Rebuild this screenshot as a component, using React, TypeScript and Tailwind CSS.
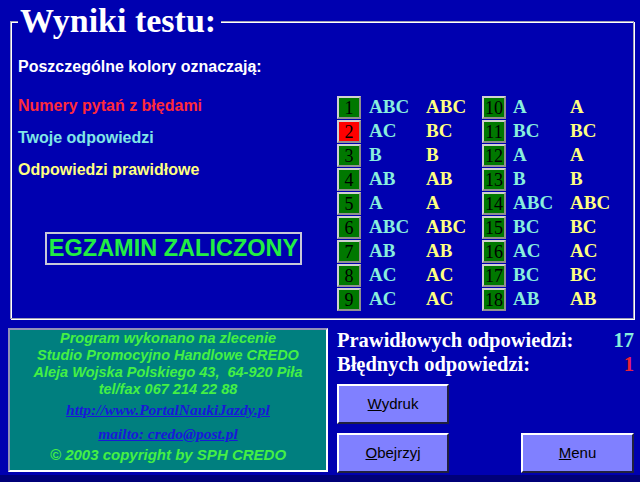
import React from "react";

type Row = { n: number; yours: string; correct: string };

const rows: Row[] = [
  { n: 1, yours: "ABC", correct: "ABC" },
  { n: 2, yours: "AC", correct: "BC" },
  { n: 3, yours: "B", correct: "B" },
  { n: 4, yours: "AB", correct: "AB" },
  { n: 5, yours: "A", correct: "A" },
  { n: 6, yours: "ABC", correct: "ABC" },
  { n: 7, yours: "AB", correct: "AB" },
  { n: 8, yours: "AC", correct: "AC" },
  { n: 9, yours: "AC", correct: "AC" },
  { n: 10, yours: "A", correct: "A" },
  { n: 11, yours: "BC", correct: "BC" },
  { n: 12, yours: "A", correct: "A" },
  { n: 13, yours: "B", correct: "B" },
  { n: 14, yours: "ABC", correct: "ABC" },
  { n: 15, yours: "BC", correct: "BC" },
  { n: 16, yours: "AC", correct: "AC" },
  { n: 17, yours: "BC", correct: "BC" },
  { n: 18, yours: "AB", correct: "AB" },
];

const serif = "font-['Liberation_Serif',serif]";
const sans = "font-['Liberation_Sans',Arial,sans-serif]";

function AnswerGroup({ items, gap }: { items: Row[]; gap: string }) {
  return (
    <div className="flex flex-col gap-[1px]">
      {items.map((row) => {
        const wrong = row.yours !== row.correct;
        return (
          <div key={row.n} className="flex h-[23px] items-start">
            <div
              className={`flex h-[23px] w-[24px] items-center justify-center border-2 border-t-[#d0d0d0] border-l-[#d0d0d0] border-b-[#909090] border-r-[#909090] ${serif} text-[18px] leading-none text-black ${
                wrong ? "bg-[#ff0000]" : "bg-[#007800]"
              }`}
            >
              {row.n}
            </div>
            <span className={`${gap} w-[57px] ${serif} text-[19px] font-bold leading-[21px] text-[#88eedd]`}>{row.yours}</span>
            <span className={`w-[56px] ${serif} text-[19px] font-bold leading-[21px] text-[#ffff80]`}>{row.correct}</span>
          </div>
        );
      })}
    </div>
  );
}

function Button({ label, width }: { label: string; width: string }) {
  return (
    <button
      className={`flex h-[40px] ${width} items-center justify-center border-2 border-t-white border-l-white border-b-[#202040] border-r-[#202040] bg-[#8080ff] ${sans} text-[15px] text-black`}
    >
      <span className="underline">{label[0]}</span>
      {label.slice(1)}
    </button>
  );
}

export default function App() {
  return (
    <div className="flex h-[482px] w-[640px] flex-col overflow-hidden bg-[#0000b0]">
      <div className="relative ml-[10px] mt-[21px] h-[298px] w-[624px] border border-[#a0a0b8] shadow-[inset_1px_1px_0_#ffffff,1px_1px_0_#ffffff]">
        <h1
          className={`absolute left-[7px] top-[-18px] bg-[#0000b0] pl-[2px] pr-[5px] ${serif} text-[34px] font-bold leading-[34px] text-white`}
        >
          Wyniki testu:
        </h1>

        <div className="flex pl-[7px]">
          <div className={`flex w-[319px] flex-col ${sans} font-bold`}>
            <p className="mt-[36px] text-[16px] leading-[18px] text-white">Poszczególne kolory oznaczają:</p>
            <p className="mt-[14px] text-[16px] leading-[32px] text-[#ff2a3a]">Numery pytań z błędami</p>
            <p className="text-[16px] leading-[32px] text-[#80e6e6]">Twoje odpowiedzi</p>
            <p className="text-[16px] leading-[32px] text-[#ffff80]">Odpowiedzi prawidłowe</p>
            <div className="ml-[27px] mt-[46px] flex h-[33px] w-[257px] items-center justify-center border-2 border-[#c8c8d8] text-[23.5px] leading-none text-[#22ee44]">
              EGZAMIN ZALICZONY
            </div>
          </div>

          <div className="mt-[74px] flex">
            <AnswerGroup items={rows.slice(0, 9)} gap="ml-[8px]" />
            <AnswerGroup items={rows.slice(9)} gap="ml-[7px]" />
          </div>
        </div>
      </div>

      <div className="flex">
        <div
          className={`ml-[8px] mt-[9px] flex h-[144px] w-[320px] flex-col items-center border-2 border-t-[#9090b8] border-l-[#9090b8] border-b-white border-r-white bg-[#007f7f] ${sans} text-[14.5px] font-bold italic text-[#44f044]`}
        >
          <p className="leading-[17px]">Program wykonano na zlecenie</p>
          <p className="leading-[17px]">Studio Promocyjno Handlowe CREDO</p>
          <p className="leading-[17px]">Aleja Wojska Polskiego 43,&nbsp; 64-920 Piła</p>
          <p className="leading-[17px]">tel/fax 067 214 22 88</p>
          <a className={`mt-[3px] ${serif} text-[15.5px] leading-[17px] text-[#1818d8] underline`}>http://www.PortalNaukiJazdy.pl</a>
          <a className={`mt-[7px] ${serif} text-[15.5px] leading-[17px] text-[#1818d8] underline`}>mailto: credo@post.pl</a>
          <p className="mt-[4px] text-[15px] leading-[17px]">© 2003 copyright by SPH CREDO</p>
        </div>

        <div className="ml-[9px] mt-[9px] flex w-[297px] flex-col">
          <div className={`flex justify-between ${serif} text-[20.5px] font-bold leading-[24px] text-white`}>
            <span>Prawidłowych odpowiedzi:</span>
            <span className="text-[#88eedd]">17</span>
          </div>
          <div className={`flex justify-between ${serif} text-[20.5px] font-bold leading-[24px] text-white`}>
            <span>Błędnych odpowiedzi:</span>
            <span className="text-[#e8203c]">1</span>
          </div>
          <div className="mt-[8px]">
            <Button label="Wydruk" width="w-[112px]" />
          </div>
          <div className="mt-[9px] flex justify-between">
            <Button label="Obejrzyj" width="w-[112px]" />
            <Button label="Menu" width="w-[113px]" />
          </div>
        </div>
      </div>

      <div className="mt-auto h-[7px] bg-[#000078]" />
    </div>
  );
}
